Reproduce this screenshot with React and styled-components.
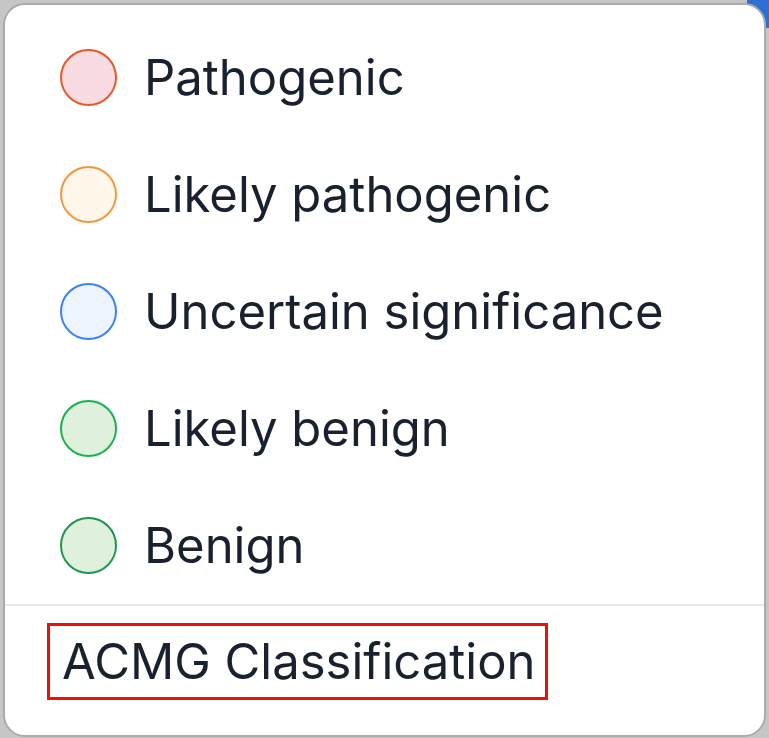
import styled, { createGlobalStyle } from 'styled-components'

const Global = createGlobalStyle`
  html, body { margin: 0; padding: 0; }
  body {
    background: #c6c6c6;
    font-family: Inter, "Noto Sans", "Liberation Sans", sans-serif;
    width: 769px;
    height: 738px;
    overflow: hidden;
  }
`

const Page = styled.div`
  position: relative;
  width: 769px;
  height: 738px;
  padding: 3px 3px 1px 3px;
  box-sizing: border-box;
`

const CornerPatch = styled.div`
  position: absolute;
  top: 0;
  right: 0;
  width: 22px;
  height: 28px;
  background: #2f6fd1;
`

const Card = styled.div`
  position: relative;
  height: 100%;
  background: #fff;
  border: 2px solid #ababab;
  border-radius: 22px;
  box-sizing: border-box;
  display: flex;
  flex-direction: column;
  padding-top: 14px;
`

const List = styled.ul`
  list-style: none;
  margin: 0;
  padding: 0 0 0 55px;
  border-bottom: 2px solid #e5e7eb;
`

const Row = styled.li`
  height: 117px;
  display: flex;
  align-items: center;
  gap: 27px;
`

const Dot = styled.span`
  width: 57px;
  height: 57px;
  border-radius: 50%;
  box-sizing: border-box;
  border: 2.5px solid ${p => p.$stroke};
  background: ${p => p.$fill};
  flex: none;
`

const Label = styled.span`
  font-size: 49px;
  color: #18212d;
`

const Footer = styled.div`
  flex: 1;
  display: flex;
  align-items: flex-start;
  padding: 17px 0 0 42px;
`

const Title = styled.div`
  border: 3px solid #f20d0d;
  padding: 0 9px 0 12px;
  height: 77px;
  box-sizing: border-box;
  display: flex;
  align-items: center;
  font-size: 49px;
  color: #18212d;
`

const items = [
  { label: 'Pathogenic', stroke: '#e8582b', fill: '#f9dbe2' },
  { label: 'Likely pathogenic', stroke: '#f4983f', fill: '#fff7ea' },
  { label: 'Uncertain significance', stroke: '#3b82f6', fill: '#eef4fe' },
  { label: 'Likely benign', stroke: '#18b34f', fill: '#dff0dc' },
  { label: 'Benign', stroke: '#22954e', fill: '#dff0dc' },
]

export default function App() {
  return (
    <Page>
      <Global />
      <CornerPatch />
      <Card>
        <List>
          {items.map(it => (
            <Row key={it.label}>
              <Dot $stroke={it.stroke} $fill={it.fill} />
              <Label>{it.label}</Label>
            </Row>
          ))}
        </List>
        <Footer>
          <Title>ACMG Classification</Title>
        </Footer>
      </Card>
    </Page>
  )
}
